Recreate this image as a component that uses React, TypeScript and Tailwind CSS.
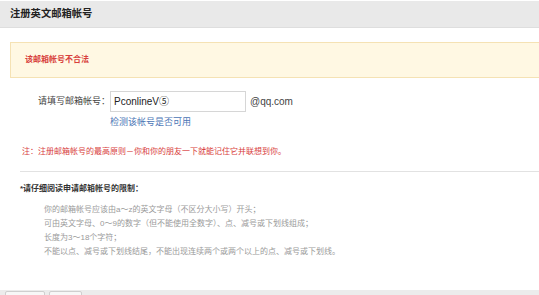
const rules = [
  '你的邮箱帐号应该由a～z的英文字母（不区分大小写）开头；',
  '可由英文字母、0～9的数字（但不能使用全数字）、点、减号或下划线组成；',
  '长度为3～18个字符；',
  '不能以点、减号或下划线结尾，不能出现连续两个或两个以上的点、减号或下划线。',
]

export default function App() {
  return (
    <div className="w-[539px] h-[295px] overflow-hidden bg-white flex flex-col font-['Liberation_Sans','Noto_Sans_CJK_SC',sans-serif]">
      {/* Header */}
      <div className="mt-px h-[27px] bg-[#e9e9e9] border-b border-[#dedede] flex items-center pl-[10px] shrink-0">
        <span className="text-[10.3px] font-bold text-[#222]">注册英文邮箱帐号</span>
      </div>

      {/* Error */}
      <div className="mt-[14px] ml-[10px] h-[36px] bg-[#fff8e3] border-t border-l border-b border-[#f5e2b4] flex items-center pl-[14px] shrink-0">
        <span className="text-[8px] font-bold text-[#d8403c]">该邮箱帐号不合法</span>
      </div>

      {/* Form */}
      <div className="mt-[13px] flex items-center shrink-0">
        <label className="w-[110px] text-right text-[9px] text-[#444]">请填写邮箱帐号：</label>
        <div className="w-[136px] h-[21px] border border-[#d6d6d6] flex items-center pl-[3px] text-[10px] text-[#222]">
          PconlineV⑤
        </div>
        <span className="ml-[4px] text-[10px] text-[#444]">@qq.com</span>
      </div>
      <div className="mt-[4px] pl-[110px] text-[9px] leading-[12px] text-[#4a75b5] shrink-0">检测该帐号是否可用</div>

      <div className="mt-[18px] pl-[22px] text-[8px] leading-[12px] text-[#d8403c] shrink-0">
        注：注册邮箱帐号的最高原则－你和你的朋友一下就能记住它并联想到你。
      </div>

      <div className="mt-[13px] ml-[20px] border-t border-[#e2e2e2] shrink-0" />

      <div className="mt-[11px] pl-[20px] text-[8px] leading-[12px] font-bold text-[#333] shrink-0">*请仔细阅读申请邮箱帐号的限制：</div>

      <div className="mt-[8px] pl-[44px] flex flex-col text-[8px] leading-[14px] text-[#9a9a9a] shrink-0">
        {rules.map(r => (
          <span key={r}>{r}</span>
        ))}
      </div>

      {/* Bottom bar */}
      <div className="mt-auto h-[5px] bg-[#ececec] flex items-start gap-[4px] pl-[5px] pt-[1px] shrink-0">
        <div className="w-[40px] h-[8px] rounded-[2px] border border-[#cfcfcf] bg-[#f7f7f7]" />
        <div className="w-[33px] h-[8px] rounded-[2px] border border-[#cfcfcf] bg-[#f7f7f7]" />
      </div>
    </div>
  )
}
